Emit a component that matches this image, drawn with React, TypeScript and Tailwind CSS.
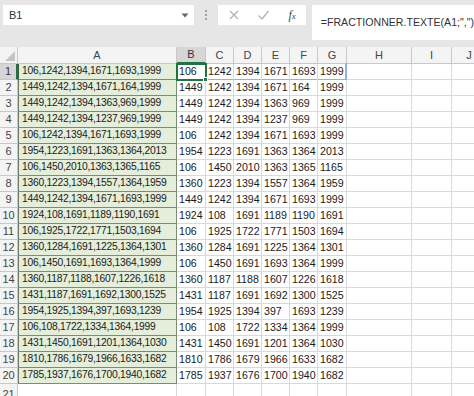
import React from "react";

const rows: string[][] = [
  ["106", "1242", "1394", "1671", "1693", "1999"],
  ["1449", "1242", "1394", "1671", "164", "1999"],
  ["1449", "1242", "1394", "1363", "969", "1999"],
  ["1449", "1242", "1394", "1237", "969", "1999"],
  ["106", "1242", "1394", "1671", "1693", "1999"],
  ["1954", "1223", "1691", "1363", "1364", "2013"],
  ["106", "1450", "2010", "1363", "1365", "1165"],
  ["1360", "1223", "1394", "1557", "1364", "1959"],
  ["1449", "1242", "1394", "1671", "1693", "1999"],
  ["1924", "108", "1691", "1189", "1190", "1691"],
  ["106", "1925", "1722", "1771", "1503", "1694"],
  ["1360", "1284", "1691", "1225", "1364", "1301"],
  ["106", "1450", "1691", "1693", "1364", "1999"],
  ["1360", "1187", "1188", "1607", "1226", "1618"],
  ["1431", "1187", "1691", "1692", "1300", "1525"],
  ["1954", "1925", "1394", "397", "1693", "1239"],
  ["106", "108", "1722", "1334", "1364", "1999"],
  ["1431", "1450", "1691", "1201", "1364", "1030"],
  ["1810", "1786", "1679", "1966", "1633", "1682"],
  ["1785", "1937", "1676", "1700", "1940", "1682"],
];

const numW = ["w-[29px]", "w-[28px]", "w-[28px]", "w-[28px]", "w-[28px]", "w-[29px]"];
const letters = ["B", "C", "D", "E", "F", "G"];

const cellFont = { fontFamily: "'Liberation Sans', Arial, sans-serif" };

export default function App() {
  return (
    <div className="w-[474px] h-[396px] overflow-hidden bg-white text-[#1a1a1a]" style={cellFont}>
      {/* Toolbar */}
      <div className="h-[47px] bg-[#e6e6e6] flex items-start pt-[5px] pl-[3px]">
        <div className="w-[192px] h-[20px] bg-white flex items-center justify-between pl-[6px] pr-[5px]">
          <span className="text-[11px] text-[#333]">B1</span>
          <svg width="8" height="5" viewBox="0 0 8 5">
            <path d="M0.5 0.5 L7.5 0.5 L4 4.5 Z" fill="#666" />
          </svg>
        </div>
        <div className="w-[25px] h-[20px] flex flex-col items-center justify-center gap-[2px]">
          <div className="w-[2px] h-[2px] bg-[#a0a0a0]" />
          <div className="w-[2px] h-[2px] bg-[#a0a0a0]" />
          <div className="w-[2px] h-[2px] bg-[#a0a0a0]" />
        </div>
        <div className="w-[88px] h-[20px] bg-white flex items-center">
          <svg width="12" height="12" viewBox="0 0 12 12" className="ml-[10px]">
            <path d="M2 2 L10 10 M10 2 L2 10" stroke="#b0b0b0" strokeWidth="1.2" />
          </svg>
          <svg width="13" height="12" viewBox="0 0 13 12" className="ml-[17px]">
            <path d="M1.5 6.5 L5 10 L11.5 2" stroke="#b0b0b0" strokeWidth="1.2" fill="none" />
          </svg>
          <span
            className="ml-[18px] text-[12px] italic text-[#444]"
            style={{ fontFamily: "'Liberation Serif', 'Times New Roman', serif" }}
          >
            f<span className="text-[9px]">x</span>
          </span>
        </div>
        <div className="ml-[6px] flex-1 h-[35px] bg-white pl-[9px] pt-[4px]">
          <span className="text-[10.6px] text-[#333]">=FRACTIONNER.TEXTE(A1;",")</span>
        </div>
      </div>

      {/* Column header row */}
      <div className="flex h-[17px] bg-[#f4f4f4] text-[11px] text-[#444]">
        <div className="w-[18px] shrink-0 border-r border-b border-[#c8c8c8] relative">
          <svg width="10" height="10" viewBox="0 0 10 10" className="absolute right-[2px] bottom-[2px]">
            <path d="M10 0 L10 10 L0 10 Z" fill="#c4c4c4" />
          </svg>
        </div>
        <div className="w-[159px] shrink-0 border-r border-b border-[#c8c8c8] flex items-center justify-center">A</div>
        {letters.map((l, i) => (
          <div
            key={l}
            className={`${numW[i]} shrink-0 border-r flex items-center justify-center ${
              i === 0 ? "bg-[#d6d6d6] border-b-2 border-b-[#217346] border-r-[#c8c8c8] text-[#333]" : "border-b border-[#c8c8c8]"
            }`}
          >
            {l}
          </div>
        ))}
        <div className="w-[65px] shrink-0 border-r border-b border-[#c8c8c8] flex items-center justify-center">H</div>
        <div className="w-[40px] shrink-0 border-r border-b border-[#c8c8c8] flex items-center justify-center">I</div>
        <div className="flex-1 border-b border-[#c8c8c8] flex items-center justify-center pl-[12px]">J</div>
      </div>

      {/* Data rows */}
      {rows.map((r, idx) => {
        const n = idx + 1;
        const first = idx === 0;
        return (
          <div key={n} className="flex h-[16px] text-[10.6px] leading-none">
            <div
              className={`w-[18px] shrink-0 flex items-center justify-center text-[11px] border-b border-[#c8c8c8] ${
                first ? "bg-[#d6d6d6] text-[#333] border-r-2 border-r-[#217346]" : "bg-[#f4f4f4] text-[#444] border-r border-r-[#c8c8c8]"
              }`}
            >
              {n}
            </div>
            <div
              className={`w-[159px] shrink-0 bg-[#e4eedb] border-b border-r border-[#7d8a78] flex items-center pl-[3px] text-[10.3px] tracking-[-0.25px] ${
                first ? "border-l border-l-[#3f5a3a]" : "border-l border-l-[#6a7a66]"
              }`}
            >
              {r.join(",")}
            </div>
            {r.map((v, i) => (
              <div
                key={i}
                className={`${numW[i]} shrink-0 border-r border-b border-[#d9d9d9] flex items-center pl-[2px] relative`}
              >
                {v}
                {first && i === 0 && (
                  <>
                    <div className="absolute -left-[1px] -top-[1px] w-[31px] h-[18px] border-2 border-[#217346] pointer-events-none" />
                    <div className="absolute -right-[3px] -bottom-[3px] w-[5px] h-[5px] bg-[#217346] border border-white z-10" />
                  </>
                )}
                {first && i === 5 && (
                  <div className="absolute -right-[1px] -top-[1px] w-[2px] h-[17px] bg-[#8fb3e0]" />
                )}
                {first && i > 0 && (
                  <div className="absolute left-0 right-0 -bottom-[1px] h-[1px] bg-[#8fb3e0]" />
                )}
              </div>
            ))}
            <div className="w-[65px] shrink-0 border-r border-b border-[#d9d9d9]" />
            <div className="w-[40px] shrink-0 border-r border-b border-[#d9d9d9]" />
            <div className="flex-1 border-b border-[#d9d9d9]" />
          </div>
        );
      })}
      <div className="flex h-[16px] text-[11px]">
        <div className="w-[18px] shrink-0 bg-[#f4f4f4] text-[#444] border-r border-[#c8c8c8] flex items-start pt-[2px] justify-center">21</div>
        <div className="w-[159px] shrink-0 border-r border-[#d9d9d9]" />
        {numW.map((w, i) => (
          <div key={i} className={`${w} shrink-0 border-r border-[#d9d9d9]`} />
        ))}
        <div className="w-[65px] shrink-0 border-r border-[#d9d9d9]" />
        <div className="w-[40px] shrink-0 border-r border-[#d9d9d9]" />
      </div>
    </div>
  );
}
